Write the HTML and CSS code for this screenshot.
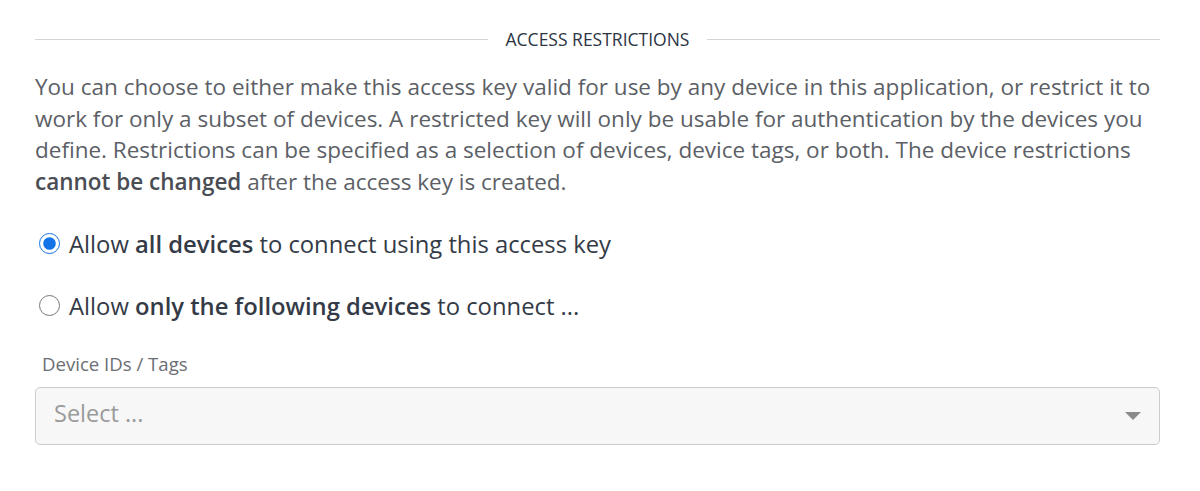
FILE: index.html
```html
<!DOCTYPE html>
<html lang="en">
<head>
    <meta charset="UTF-8">
    <meta name="viewport" content="width=device-width, initial-scale=1.0">
    <title>Access Restrictions</title>
    <link rel="stylesheet" href="styles.css">
</head>
<body>
    <div class="container">
        <div class="divider">
            <span class="divider-line"></span>
            <span class="divider-title">ACCESS RESTRICTIONS</span>
            <span class="divider-line"></span>
        </div>

        <p class="intro">
            You can choose to either make this access key valid for use by any device in this application, or restrict it to<br>
            work for only a subset of devices. A restricted key will only be usable for authentication by the devices you<br>
            define. Restrictions can be specified as a selection of devices, device tags, or both. The device restrictions<br>
            <strong>cannot be changed</strong> after the access key is created.
        </p>

        <form class="options">
            <label class="option">
                <input type="radio" name="restriction" value="all" checked>
                <span>Allow <strong>all devices</strong> to connect using this access key</span>
            </label>
            <label class="option">
                <input type="radio" name="restriction" value="some">
                <span>Allow <strong>only the following devices</strong> to connect ...</span>
            </label>

            <div class="field">
                <label class="field-label">Device IDs / Tags</label>
                <div class="select">
                    <span class="placeholder">Select ...</span>
                    <span class="caret"></span>
                </div>
            </div>
        </form>
    </div>
</body>
</html>
```

FILE: styles.css
```css
body {
    font-family: "Open Sans", "Liberation Sans", sans-serif;
    margin: 0;
    padding: 0;
    background-color: #ffffff;
}

.container {
    padding: 28px 40px 0 35px;
}

.divider {
    display: flex;
    align-items: center;
    gap: 18px;
    height: 22px;
}

.divider-line {
    flex: 1;
    height: 1px;
    background-color: #d4d4d4;
}

.divider-title {
    font-size: 17.5px;
    color: #2c3443;
}

.intro {
    margin: 21px 0 0 0;
    font-size: 22.5px;
    line-height: 31.7px;
    color: #5c5f66;
    white-space: nowrap;
}

.intro strong {
    color: #4a4d53;
    font-weight: 600;
}

.options {
    display: flex;
    flex-direction: column;
    margin-top: 26px;
}

.option {
    display: flex;
    align-items: center;
    gap: 9px;
    font-size: 23.8px;
    color: #343b47;
    height: 40px;
    margin-bottom: 22px;
}

.option strong {
    font-weight: 600;
}

.option input {
    width: 21px;
    height: 21px;
    margin: 0 0 0 4px;
    accent-color: #1473e6;
}

.field {
    display: flex;
    flex-direction: column;
    gap: 10px;
    margin-top: 3px;
}

.field-label {
    font-size: 18.6px;
    line-height: 26px;
    color: #6b6e73;
    padding-left: 7px;
}

.select {
    display: flex;
    align-items: center;
    justify-content: space-between;
    padding: 0 18px 6px 18px;
    box-sizing: border-box;
    height: 58px;
    background-color: #f7f7f7;
    border: 1px solid #cccccc;
    border-radius: 5px;
}

.placeholder {
    font-size: 23.5px;
    color: #9a9a9a;
}

.caret {
    width: 0;
    height: 0;
    margin-top: 6px;
    border-left: 8.5px solid transparent;
    border-right: 8.5px solid transparent;
    border-top: 8px solid #8a8a8a;
}
```
